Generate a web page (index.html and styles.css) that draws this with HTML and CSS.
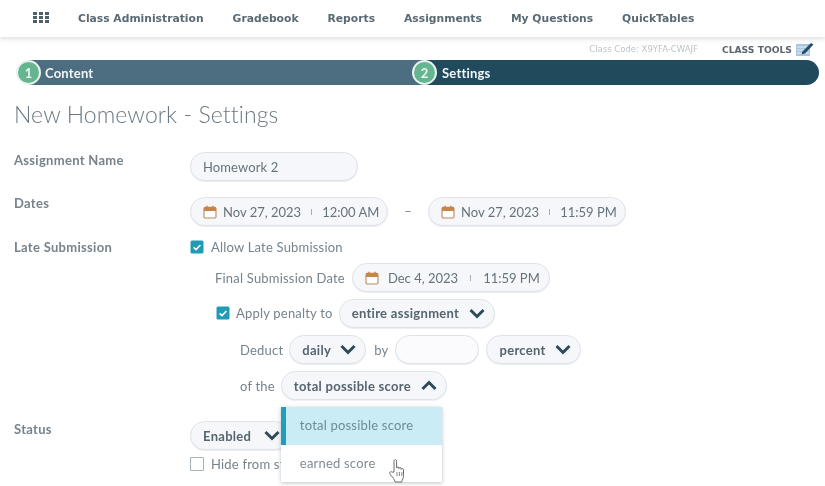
FILE: index.html
```html
<!DOCTYPE html>
<html lang="en">
<head>
<meta charset="utf-8">
<title>New Homework - Settings</title>
<link rel="stylesheet" href="styles.css">
</head>
<body>
<svg class="defs" width="0" height="0" aria-hidden="true">
  <symbol id="cal" viewBox="0 0 14 14">
    <rect x="1" y="2.5" width="12" height="10.5" rx="1.2" fill="#fff" stroke="#b98a5e" stroke-width="1.1"/>
    <path d="M1 2.8a1 1 0 0 1 1-1h10a1 1 0 0 1 1 1V6H1z" fill="#c8854a"/>
    <path d="M4 .8v2.4M10 .8v2.4" stroke="#c8854a" stroke-width="1.4"/>
  </symbol>
  <symbol id="down" viewBox="0 0 16 11">
    <path d="M1.500 2 8 8.500 14.500 2" fill="none" stroke="#2c4a5a" stroke-width="3"/>
  </symbol>
  <symbol id="up" viewBox="0 0 16 11">
    <path d="M1.500 9 8 2.500 14.500 9" fill="none" stroke="#2c4a5a" stroke-width="3"/>
  </symbol>
  <symbol id="check" viewBox="0 0 14 14">
    <rect x=".5" y=".5" width="13" height="13" rx="1.5" fill="#1f9bb5"/>
    <path d="M3.600 7.400 6 9.600l4.400-4.600" fill="none" stroke="#fff" stroke-width="1.6"/>
  </symbol>
</svg>

<nav class="nav">
  <svg class="apps" width="16" height="11" viewBox="0 0 16 11">
    <path d="M0 0h4v3H0zM6 0h4v3H6zM12 0h4v3h-4zM0 4h4v3H0zM6 4h4v3H6zM12 4h4v3h-4zM0 8h4v3H0zM6 8h4v3H6zM12 8h4v3h-4z" fill="#4d5f6b"/>
  </svg>
  <a>Class Administration</a>
  <a>Gradebook</a>
  <a>Reports</a>
  <a>Assignments</a>
  <a>My Questions</a>
  <a>QuickTables</a>
</nav>

<div class="subbar">
  <span class="code">Class Code: X9YFA-CWAJF</span>
  <span class="tools">CLASS TOOLS</span>
  <svg width="18" height="14" viewBox="0 0 18 14">
    <path d="M0 2h14v12H0z" fill="#a9c6dc"/>
    <path d="M1 5h12M1 8h12M1 11h12" stroke="#e6eff6" stroke-width="1"/>
    <path d="M6 10 15 1l2.500 1.500L9 11.500l-3.200.8z" fill="#24506b"/>
  </svg>
</div>

<div class="stepper">
  <div class="step step-one"><span class="num">1</span><span class="step-text">Content</span></div>
  <div class="step step-two"><span class="num">2</span><span class="step-text">Settings</span></div>
</div>

<h1>New Homework - Settings</h1>

<main class="form">
  <div class="row row-name">
    <label class="lab">Assignment Name</label>
    <div class="field"><div class="pill name-pill">Homework 2</div></div>
  </div>

  <div class="row row-dates">
    <label class="lab lab-dates">Dates</label>
    <div class="field">
      <div class="pill date"><svg class="cal"><use href="#cal"/></svg><span>Nov 27, 2023</span><i></i><span>12:00 AM</span></div>
      <span class="dash">–</span>
      <div class="pill date"><svg class="cal"><use href="#cal"/></svg><span>Nov 27, 2023</span><i></i><span>11:59 PM</span></div>
    </div>
  </div>

  <div class="row row-late">
    <label class="lab">Late Submission</label>
    <div class="stack">
      <div class="line line-allow"><svg class="box"><use href="#check"/></svg><span>Allow Late Submission</span></div>
      <div class="line line-final"><span>Final Submission Date</span>
        <div class="pill date final"><svg class="cal"><use href="#cal"/></svg><span>Dec 4, 2023</span><i></i><span>11:59 PM</span></div>
      </div>
      <div class="line line-apply"><svg class="box"><use href="#check"/></svg><span>Apply penalty to</span>
        <div class="pill sel sel-entire">entire assignment<svg class="chev"><use href="#down"/></svg></div>
      </div>
      <div class="line line-deduct"><span>Deduct</span>
        <div class="pill sel sel-daily">daily<svg class="chev"><use href="#down"/></svg></div>
        <span class="by">by</span>
        <div class="pill blank"></div>
        <div class="pill sel sel-percent">percent<svg class="chev"><use href="#down"/></svg></div>
      </div>
      <div class="line line-of"><span>of the</span>
        <div class="anchor">
          <div class="pill sel sel-total">total possible score<svg class="chev"><use href="#up"/></svg></div>
          <ul class="menu">
            <li class="on">total possible score</li>
            <li>earned score</li>
          </ul>
          <svg class="hand" width="20" height="26" viewBox="0 0 20 26">
            <path d="M7 14V3.200c0-2 2.600-2 2.600 0V10c0-1.400 2.300-1.400 2.300 0v.6c0-1.400 2.300-1.400 2.300 0v.8c0-1.300 2.300-1.300 2.300.2v6c0 3-1.300 4-1.800 6.400H8.200C7.400 21 5.800 19.800 3.400 16.700 1.700 14.500 3.600 12.800 5.200 14.200z" fill="#fff" stroke="#6a6a6a" stroke-width="1"/>
            <path d="M10 14v4M12.400 14v4M14.800 14v4" stroke="#6a6a6a" stroke-width=".8"/>
          </svg>
        </div>
      </div>
    </div>
  </div>

  <div class="row row-status">
    <label class="lab">Status</label>
    <div class="stack">
      <div class="pill sel sel-status">Enabled<svg class="chev"><use href="#down"/></svg></div>
      <div class="line line-hide"><span class="empty-box"></span><span>Hide from st</span></div>
    </div>
  </div>
</main>
</body>
</html>
```
FILE: styles.css
```css
* { box-sizing: border-box; }
body {
  margin: 0;
  height: 486px;
  overflow: hidden;
  background: #fff;
  color: #76838c;
  font-family: "Lato", "Open Sans", sans-serif;
  font-size: 13px;
  letter-spacing: .2px;
  filter: blur(0.35px);
}
.defs { position: absolute; }

.nav {
  height: 37px;
  display: flex;
  align-items: center;
  padding: 0 0 1px 33px;
  box-shadow: 0 2px 5px rgba(90, 90, 110, .2);
  background: #fff;
  letter-spacing: 0;
}
.apps { margin-right: 29px; margin-top: -2px; }
.nav a {
  font-family: "DejaVu Sans", sans-serif;
  font-weight: 700;
  font-size: 10.750px;
  color: #5a6a74;
  margin-right: 29px;
}

.subbar {
  height: 23px;
  display: flex;
  align-items: center;
  justify-content: flex-end;
  padding: 1px 11px 0 0;
  letter-spacing: 0;
}
.code { font-family: "DejaVu Sans", sans-serif; font-size: 8.500px; color: #bcc3c8; margin-right: 24px; }
.tools { font-family: "DejaVu Sans", sans-serif; font-weight: 700; font-size: 9.200px; color: #5d666c; margin-right: 4px; }

.stepper {
  margin: 0 6px 0 16px;
  display: flex;
  height: 25px;
  color: #f2f6f8;
  font-size: 13px;
  font-weight: 700;
}
.step { display: flex; align-items: center; height: 25px; }
.step-one { width: 408px; background: linear-gradient(#4c6e80 0 0) 12px 0 / 100% 100% no-repeat; }
.step-two {
  flex: 1;
  margin-left: -12px;
  position: relative;
  background: linear-gradient(#1f4b5d 0 0) 12px 0 / 100% 100% no-repeat;
  border-radius: 0 13px 13px 0;
}
.num {
  width: 25px;
  height: 25px;
  border-radius: 50%;
  background: #65b690;
  border: 2px solid #e9f3ee;
  color: #eaf6ef;
  display: flex;
  align-items: center;
  justify-content: center;
  flex: none;
  font-size: 13px;
}
.step-one .step-text { margin-left: 4px; }
.step-two .step-text { margin-left: 5px; }

h1 {
  margin: 17px 0 0 14px;
  height: 25px;
  font-size: 23px;
  line-height: 25px;
  font-weight: 300;
  color: #6b7880;
  letter-spacing: .1px;
}

.form { padding-left: 14px; margin-top: 25px; }
.row { display: grid; grid-template-columns: 176px 1fr; }
.lab { font-weight: 700; color: #76838c; font-size: 13px; line-height: 16px; letter-spacing: .3px; }
.lab-dates { margin-top: -2px; }
.field { display: flex; align-items: flex-start; }
.stack { display: flex; flex-direction: column; align-items: flex-start; }

.pill {
  height: 29px;
  border: 1px solid #dfe2e7;
  border-radius: 15px;
  background: #f6f7fa;
  display: flex;
  align-items: center;
  color: #65737c;
  font-size: 13px;
  flex: none;
  box-shadow: 0 1px 0 #eceef1;
}
.name-pill { width: 168px; padding-left: 12px; letter-spacing: .1px; }
.row-name { height: 45px; }
.row-dates { height: 42px; }
.date { width: 198px; padding-left: 12px; letter-spacing: 0; }
.cal { width: 14px; height: 14px; margin-right: 6px; flex: none; }
.date i { width: 1px; height: 6px; background: #a7afb5; margin: 0 10px; flex: none; }
.dash { width: 40px; text-align: center; line-height: 29px; }
.final .cal { margin-right: 9px; }
.final i { margin: 0 12px; }

.row-late { height: 182px; }
.line { display: flex; align-items: center; }
.line-allow { height: 16px; margin-bottom: 8px; }
.box { width: 14px; height: 14px; margin-right: 7px; flex: none; }
.line-final { height: 29px; margin: 0 0 7px 25px; gap: 7px; }
.line-apply { height: 28px; margin: 0 0 8px 26px; }
.line-apply .box { margin-right: 6px; }
.line-apply .pill { margin-left: 6px; }
.line-deduct { height: 29px; margin: 0 0 7px 50px; gap: 6px; }
.line-deduct .by { margin: 0 1px 0 2px; }
.line-of { height: 29px; margin-left: 50px; gap: 6px; }

.sel {
  padding: 0 9px 0 12px;
  font-weight: 700;
  color: #55656f;
  font-size: 13px;
  letter-spacing: .3px;
  justify-content: space-between;
}
.chev { width: 16px; height: 11px; flex: none; }
.sel-entire { width: 156px; }
.sel-daily { width: 77px; }
.blank { width: 84px; margin-right: 1px; background: #fbfbfd; }
.sel-percent { width: 95px; }
.sel-total { width: 166px; }
.sel-status { width: 100px; }

.anchor { position: relative; }
.menu {
  position: absolute;
  left: 0;
  top: 36px;
  width: 161px;
  height: 75px;
  margin: 0;
  padding: 0;
  list-style: none;
  background: #fff;
  box-shadow: 0 1px 4px rgba(70, 80, 90, .35);
  z-index: 2;
}
.menu li { height: 38px; padding: 0 0 2px 19px; display: flex; align-items: center; color: #808d95; }
.menu li.on { background: #c9ecf5; border-left: 5px solid #1f9fbc; padding-left: 14px; color: #6f8a96; }
.hand { position: absolute; left: 106px; top: 87px; z-index: 3; }

.line-hide { margin-top: 7px; height: 14px; }
.empty-box { width: 14px; height: 14px; border: 1.500px solid #9fb2b5; border-radius: 1px; margin-right: 7px; flex: none; }
```
